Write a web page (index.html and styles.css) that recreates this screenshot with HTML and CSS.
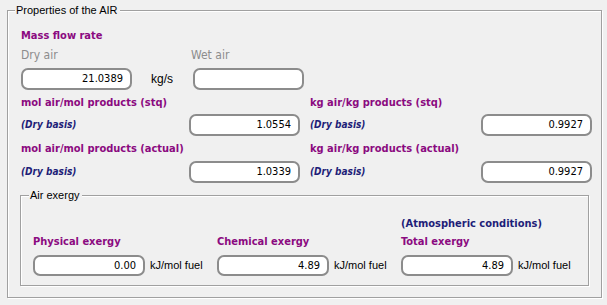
FILE: index.html
```html
<!doctype html>
<html>
<head>
<meta charset="utf-8">
<title>Properties of the AIR</title>
<link rel="stylesheet" href="styles.css">
</head>
<body>
<div class="group outer">
	<span class="legend">Properties of the AIR</span>

	<div class="flow">
		<div class="lbl">Mass flow rate</div>
		<div class="flowRow sub">
			<span class="dryCol">Dry air</span>
			<span>Wet air</span>
		</div>
		<div class="flowRow boxes">
			<div class="box">21.0389</div>
			<span class="unit kgs">kg/s</span>
			<div class="box"></div>
		</div>
	</div>

	<div class="ratios">
		<div class="lbl">mol air/mol products (stq)</div>
		<div></div>
		<div class="lbl">kg air/kg products (stq)</div>
		<div></div>

		<div class="basis">(Dry basis)</div>
		<div class="box">1.0554</div>
		<div class="basis">(Dry basis)</div>
		<div class="box">0.9927</div>

		<div class="lbl">mol air/mol products (actual)</div>
		<div></div>
		<div class="lbl">kg air/kg products (actual)</div>
		<div></div>

		<div class="basis">(Dry basis)</div>
		<div class="box">1.0339</div>
		<div class="basis">(Dry basis)</div>
		<div class="box">0.9927</div>
	</div>

	<div class="group inner">
		<span class="legend">Air exergy</span>
		<div class="exergy">
			<div class="exCol">
				<div class="lbl">Physical exergy</div>
				<div class="exRow"><div class="box">0.00</div><span class="unit">kJ/mol fuel</span></div>
			</div>
			<div class="exCol">
				<div class="lbl">Chemical exergy</div>
				<div class="exRow"><div class="box">4.89</div><span class="unit">kJ/mol fuel</span></div>
			</div>
			<div class="exCol">
				<div class="note">(Atmospheric conditions)</div>
				<div class="lbl">Total exergy</div>
				<div class="exRow"><div class="box">4.89</div><span class="unit">kJ/mol fuel</span></div>
			</div>
		</div>
	</div>
</div>
</body>
</html>
```

FILE: styles.css
```css
*{ margin:0; padding:0; box-sizing:border-box}
html,body{ background:#f0f0f0}
body{ font-family:"DejaVu Sans Condensed","DejaVu Sans",sans-serif; font-stretch:condensed; font-size:11px; color:#000; width:607px; height:305px; overflow:hidden}

.group{ position:relative; border:1px solid #a0a0a0; box-shadow:1px 1px 0 #fff, inset 1px 1px 0 #fff}
.group .legend{ position:absolute; top:-7px; background:#f0f0f0; padding:0 2px 0 1px; font-family:"Liberation Sans",sans-serif; font-size:11px; line-height:13px; color:#000}

.outer{ margin:10px 0 0 7px; width:595px; height:288px; padding:18px 0 0 13px}
.outer > .legend{ left:7px}

.lbl{ color:#8b0a80; font-weight:bold; font-size:11px; line-height:14px; white-space:nowrap}
.sub{ color:#8c8c8c; font-size:12px; line-height:14px}
.basis{ color:#1e1e78; font-weight:bold; font-style:italic; font-size:10px; line-height:22px; white-space:nowrap}
.note{ color:#1e1e78; font-weight:bold; line-height:14px; white-space:nowrap}

.box{ width:111px; height:22px; background:#fff; border:2px solid #8c8c8c; border-radius:7px; text-align:right; padding-right:7px; line-height:18px; font-size:11px; color:#000}
.unit{ font-family:"Liberation Sans",sans-serif; font-size:11px; line-height:22px; color:#000}

.flowRow{ display:flex; align-items:center}
.flowRow.sub{ margin-top:5px}
.dryCol{ width:170px}
.flowRow.boxes{ margin-top:6px}
.kgs{ width:61px; padding-left:19px; font-size:12px}

.ratios{ display:grid; grid-template-columns:169px 112px 177px 112px; grid-template-rows:24px 22px 25px 22px}
.ratios > .lbl{ padding-top:6px}
.ratios > .lbl:nth-child(8n+3){ padding-left:8px}
.ratios .basis:nth-child(8n+7){ padding-left:8px}
.ratios > .box:nth-child(8n+6){ margin-left:-1px}
.ratios > .box:nth-child(8n+8){ justify-self:end; margin-right:-1px}

.inner{ margin:12px 0 0 -1px; width:569px; height:91px; padding:21px 0 0 12px}
.inner > .legend{ left:8px}
.exergy{ display:flex}
.exCol{ width:184px; display:flex; flex-direction:column; justify-content:flex-end}
.exCol .lbl{ margin-bottom:5px}
.exCol .note{ margin-bottom:4px}
.exRow{ display:flex; align-items:center}
.exRow .box{ width:112px; height:21px; line-height:17px}
.exRow .unit{ margin-left:5px}
```
